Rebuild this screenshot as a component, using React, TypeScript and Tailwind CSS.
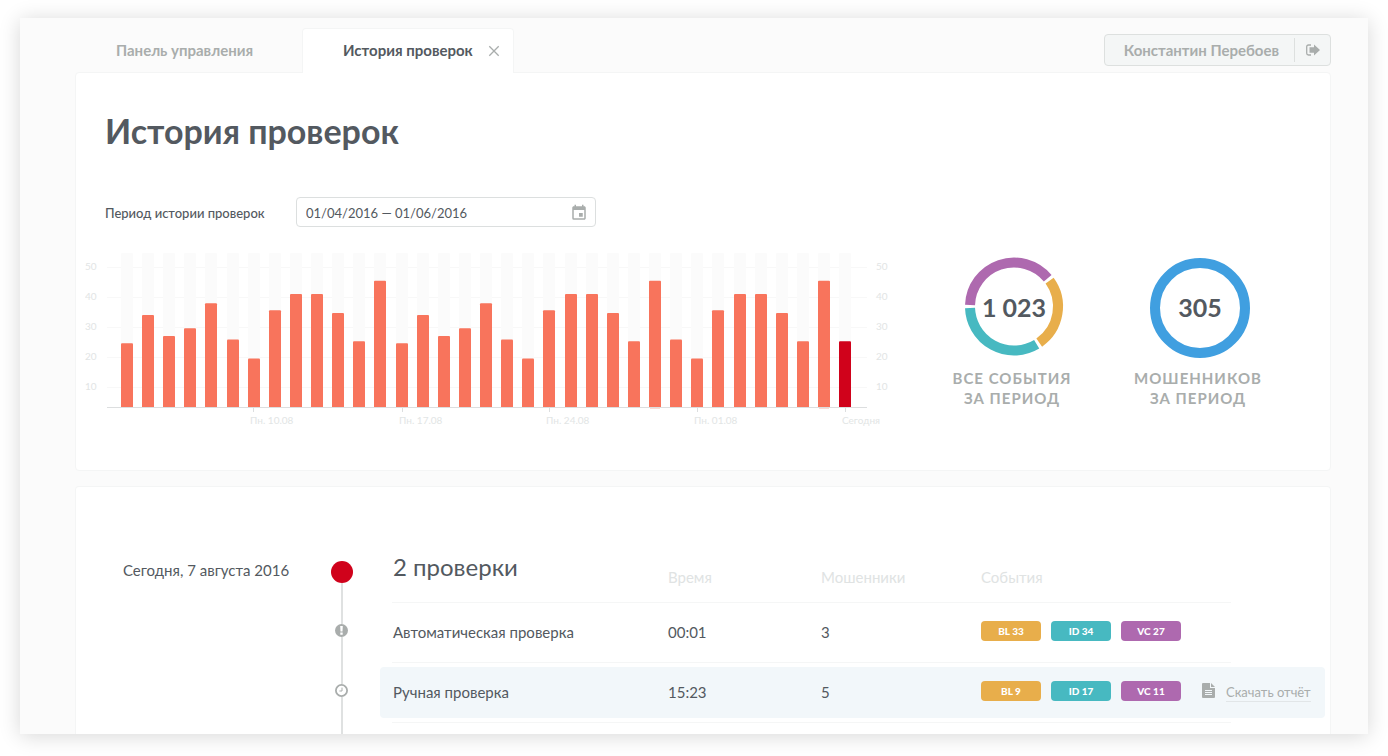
import { useState } from "react";
import { MdEvent } from "react-icons/md";

type BadgeKind = "BL" | "ID" | "VC";

interface Check {
  name: string;
  time: string;
  frauds: number;
  events: [BadgeKind, number][];
  active?: boolean;
}

const checks: Check[] = [
  { name: "Автоматическая проверка", time: "00:01", frauds: 3, events: [["BL", 33], ["ID", 34], ["VC", 27]] },
  { name: "Ручная проверка", time: "15:23", frauds: 5, events: [["BL", 9], ["ID", 17], ["VC", 11]], active: true },
];

const badgeColors: Record<BadgeKind, string> = {
  BL: "bg-[#e8ae4b]",
  ID: "bg-[#47b9c1]",
  VC: "bg-[#ae69af]",
};

const rowLayout =
  "relative grid h-[60px] grid-cols-[minmax(0,1fr)_153px_160px_220px_124px] items-center after:absolute after:right-[94px] after:bottom-0 after:left-3 after:h-px after:bg-[#f5f6f6]";

const weekA = [63.7, 92, 71, 78.7];
const weekB = [103.7, 67.5, 48.5, 96.7, 113, 113, 94, 65.7, 126.3];
const bars = [...weekA, ...weekB, ...weekA, ...weekB, ...weekB.slice(1), 65.7];

const ticks = [
  { x: 168, label: "Пн. 10.08" },
  { x: 317, label: "Пн. 17.08" },
  { x: 464, label: "Пн. 24.08" },
  { x: 612, label: "Пн. 01.08" },
  { x: 760, label: "Сегодня" },
];

function Chart() {
  return (
    <svg width="804" height="180" viewBox="0 0 804 180" className="shrink-0" role="img" aria-label="Количество проверок по дням">
      {[50, 40, 30, 20, 10].map((v, i) => (
        <g key={v} fontSize="10" fill="#e2e5e5">
          <rect x="22" y={14 + i * 30} width="760" height="1" fill="#f8f8f8" />
          <text x="0" y={17 + i * 30}>{v}</text>
          <text x="791" y={17 + i * 30}>{v}</text>
        </g>
      ))}
      {bars.map((h, i) => {
        const x = 36 + i * 21 + Math.floor((i + 3) / 8);
        return (
          <g key={i}>
            <rect x={x} y="0" width="12" height="154" rx="1" fill="#fbfbfb" />
            <path
              d={`M${x} 154v-${h - 1}q0-1 1-1h10q1 0 1 1v${h - 1}z`}
              fill={i === bars.length - 1 ? "#d0021b" : "#f8745c"}
            />
          </g>
        );
      })}
      <rect x="22" y="154" width="760" height="1" fill="#dcdedf" />
      <rect x={36 + 25 * 21 + 3 + 1} y="155" width="10" height="1" fill="#fbd9d3" />
      <rect x={36 + 33 * 21 + 4 + 1} y="155" width="10" height="1" fill="#fbd9d3" />
      {ticks.map((t) => (
        <g key={t.label} fontSize="10" fill="#e2e5e5">
          <rect x={t.x} y="155" width="1" height="4" fill="#dcdedf" />
          <text x={t.x - 3} y="171">{t.label}</text>
        </g>
      ))}
    </svg>
  );
}

function arc(from: number, to: number) {
  const p = (a: number) => {
    const r = (a * Math.PI) / 180;
    return `${50 + 44 * Math.cos(r)} ${48.5 - 44 * Math.sin(r)}`;
  };
  return `M${p(from)}A44 44 0 0 0 ${p(to)}`;
}

function EventsRing() {
  return (
    <svg viewBox="0 0 100 100" className="col-start-1 row-start-1 size-[100px] overflow-visible" fill="none" strokeWidth="10" aria-hidden="true">
      <path d={arc(40, 178)} stroke="#ae69af" />
      <path d={arc(182, 301)} stroke="#47b9c1" />
      <path d={arc(305, 396)} stroke="#e8ae4b" />
    </svg>
  );
}

function FraudRing() {
  return (
    <svg viewBox="0 0 100 100" className="col-start-1 row-start-1 size-[100px]" fill="none" aria-hidden="true">
      <circle cx="50" cy="50" r="45" stroke="#409fe0" strokeWidth="10" />
    </svg>
  );
}

function Stat({ ring, value, title }: { ring: React.ReactNode; value: string; title: string }) {
  return (
    <div className="flex w-[130px] flex-col items-center">
      <div className="grid place-items-center pl-1">
        {ring}
        <strong className="col-start-1 row-start-1 text-[25px] font-bold">{value}</strong>
      </div>
      <p className="mt-[10px] text-center text-[15px] leading-5 font-bold tracking-[1px] whitespace-nowrap text-[#a9adac] uppercase">
        {title}
        <br />
        за период
      </p>
    </div>
  );
}

function Timeline() {
  return (
    <div className="flex w-[22px] flex-col items-center" aria-hidden="true">
      <span className="size-[22px] rounded-full bg-[#d0021b]" />
      <span className="h-[41px] w-[2px] bg-[#dfe1e1]" />
      <svg viewBox="0 0 13 13" className="mr-px size-[13px]">
        <circle cx="6.5" cy="6.5" r="6.5" fill="#a9adac" />
        <path d="M5.2 2h2.6l-.3 5.5h-2zM5.3 8.500h2.400v2.200H5.300z" fill="#fff" />
      </svg>
      <span className="h-[47px] w-[2px] bg-[#dfe1e1]" />
      <svg viewBox="0 0 13 13" className="mr-px size-[13px]" fill="none" stroke="#a9adac">
        <circle cx="6.5" cy="6.5" r="5.6" strokeWidth="1.8" />
        <path d="M7 3.600v3.400H4.400" />
      </svg>
      <span className="w-[2px] flex-1 bg-[#dfe1e1]" />
    </div>
  );
}

export default function App() {
  const [period, setPeriod] = useState("01/04/2016 — 01/06/2016");

  return (
    <div className="flex min-h-screen flex-col bg-white px-5 pt-[18px] pb-[22px] font-[Lato,sans-serif] text-[#535960]">
      <div className="flex flex-1 flex-col bg-[#fbfbfb] pr-[37px] pl-[55px] shadow-[0_2px_20px_rgba(0,0,0,0.16)]">
        <header className="flex items-end justify-between pt-[10px]">
          <nav className="z-10 -mb-px flex h-[45px] text-[15px] font-bold">
            <a href="#dashboard" className="flex items-center pr-[49px] pl-[41px] text-[#a9adac]">
              Панель управления
            </a>
            <div className="flex items-center rounded-t-[4px] border border-b-0 border-[#f4f5f5] bg-white pr-[13px] pb-px pl-10">
              <a href="#history" aria-current="page">История проверок</a>
              <button type="button" aria-label="Закрыть вкладку" className="ml-[15px] cursor-pointer">
                <svg viewBox="0 0 12 12" className="size-3" fill="none" stroke="#a9adac" strokeWidth="1.3">
                  <path d="M1.3 1.3l9.4 9.4M10.7 1.3l-9.4 9.4" />
                </svg>
              </button>
            </div>
          </nav>
          <div className="mb-[6px] flex h-8 items-center rounded-[4px] border border-[#dde0df] bg-[#f4f6f6] text-[15px] font-bold text-[#a9adac]">
            <a href="#profile" className="pr-[15px] pl-[19px]">Константин Перебоев</a>
            <button type="button" aria-label="Выйти" className="flex h-6 w-9 cursor-pointer items-center justify-center border-l border-[#dde0df]">
              <svg viewBox="0 0 14 12" className="h-3 w-[14px]">
                <path d="M5 1H2.500Q.7 1 .7 2.700v6.600Q.7 11 2.500 11H5" fill="none" stroke="currentColor" strokeWidth="1.3" />
                <path d="M3.500 3.200H8V.4L14 6l-6 5.600V8.800H3.500z" fill="currentColor" />
              </svg>
            </button>
          </div>
        </header>

        <section className="rounded-[4px] border border-[#f4f5f5] bg-white pt-[35px] pb-[37px]">
          <h1 className="pl-[29px] text-[34px] leading-[46px] font-bold">История проверок</h1>
          <div className="mt-[43px] flex items-center pl-[29px] text-[13px]">
            <label htmlFor="period" className="w-[191px] pt-1 font-medium">Период истории проверок</label>
            <div className="flex h-[30px] w-[300px] items-center rounded-[4px] border border-[#dcdfdf] pt-[2px] pr-[7px] pl-[9px]">
              <input
                id="period"
                value={period}
                onChange={(e) => setPeriod(e.target.value)}
                className="min-w-0 flex-1 pt-[2px] outline-none"
              />
              <MdEvent className="size-[18px] text-[#a9adac]" />
            </div>
          </div>
          <div className="mt-[26px] flex items-start pl-[9px]">
            <Chart />
            <div className="mt-[5px] ml-[58px] flex gap-[56px]">
              <Stat ring={<EventsRing />} value="1 023" title="Все события" />
              <Stat ring={<FraudRing />} value="305" title="Мошенников" />
            </div>
          </div>
        </section>

        <section className="mt-[15px] flex flex-1 rounded-t-[4px] border border-b-0 border-[#f4f5f5] bg-white pt-[74px] pr-[5px] pl-[47px]">
          <h2 className="w-[208px] text-[15px] leading-[18px]">Сегодня, 7 августа 2016</h2>
          <Timeline />
          <table className="-mt-[18px] mb-[11px] ml-[27px] block flex-1 self-start text-left text-[15px]">
            <thead className="block">
              <tr className={rowLayout + " text-[#e0e3e3]"}>
                <th className="pb-3 pl-[13px] text-2xl font-normal text-[#535960]">2 проверки</th>
                <th className="pt-2 font-normal">Время</th>
                <th className="pt-2 font-normal">Мошенники</th>
                <th className="pt-2 font-normal">События</th>
                <th aria-label="Отчёт" />
              </tr>
            </thead>
            <tbody className="block">
              {checks.map((c) => (
                <tr
                  key={c.name}
                  className={
                    rowLayout +
                    (c.active
                      ? " before:absolute before:inset-x-0 before:top-1 before:h-[51px] before:rounded-[4px] before:bg-[#f2f7fa]"
                      : "")
                  }
                >
                  <td className="relative pb-[2px] pl-[13px]">{c.name}</td>
                  <td className="relative pb-[2px]">{c.time}</td>
                  <td className="relative pb-[2px]">{c.frauds}</td>
                  <td className="relative">
                    <div className="flex gap-[10px] pb-1">
                      {c.events.map(([kind, n]) => (
                        <span key={kind} className={"h-5 w-[60px] rounded-[4px] text-center text-[10px] leading-5 font-black text-white " + badgeColors[kind]}>
                          {kind} {n}
                        </span>
                      ))}
                    </div>
                  </td>
                  <td className="relative">
                    {c.active && (
                      <a href="#report" className="flex items-center gap-[11px] pb-[2px] pl-px text-[13px] leading-[18px] whitespace-nowrap text-[#a9adac]">
                        <svg viewBox="0 0 13 15" className="mb-1 h-[15px] w-[13px]">
                          <path d="M1 0h7v5h5v9q0 1-1 1H1q-1 0-1-1V1Q0 0 1 0z" fill="currentColor" />
                          <path d="M9 0l4 4H9z" fill="currentColor" />
                          <path d="M3 7.500h7M3 9.500h7M3 11.500h7" stroke="#f2f7fa" />
                        </svg>
                        <span className="border-b border-[#e2e6e8]">Скачать отчёт</span>
                      </a>
                    )}
                  </td>
                </tr>
              ))}
            </tbody>
          </table>
        </section>
      </div>
    </div>
  );
}
